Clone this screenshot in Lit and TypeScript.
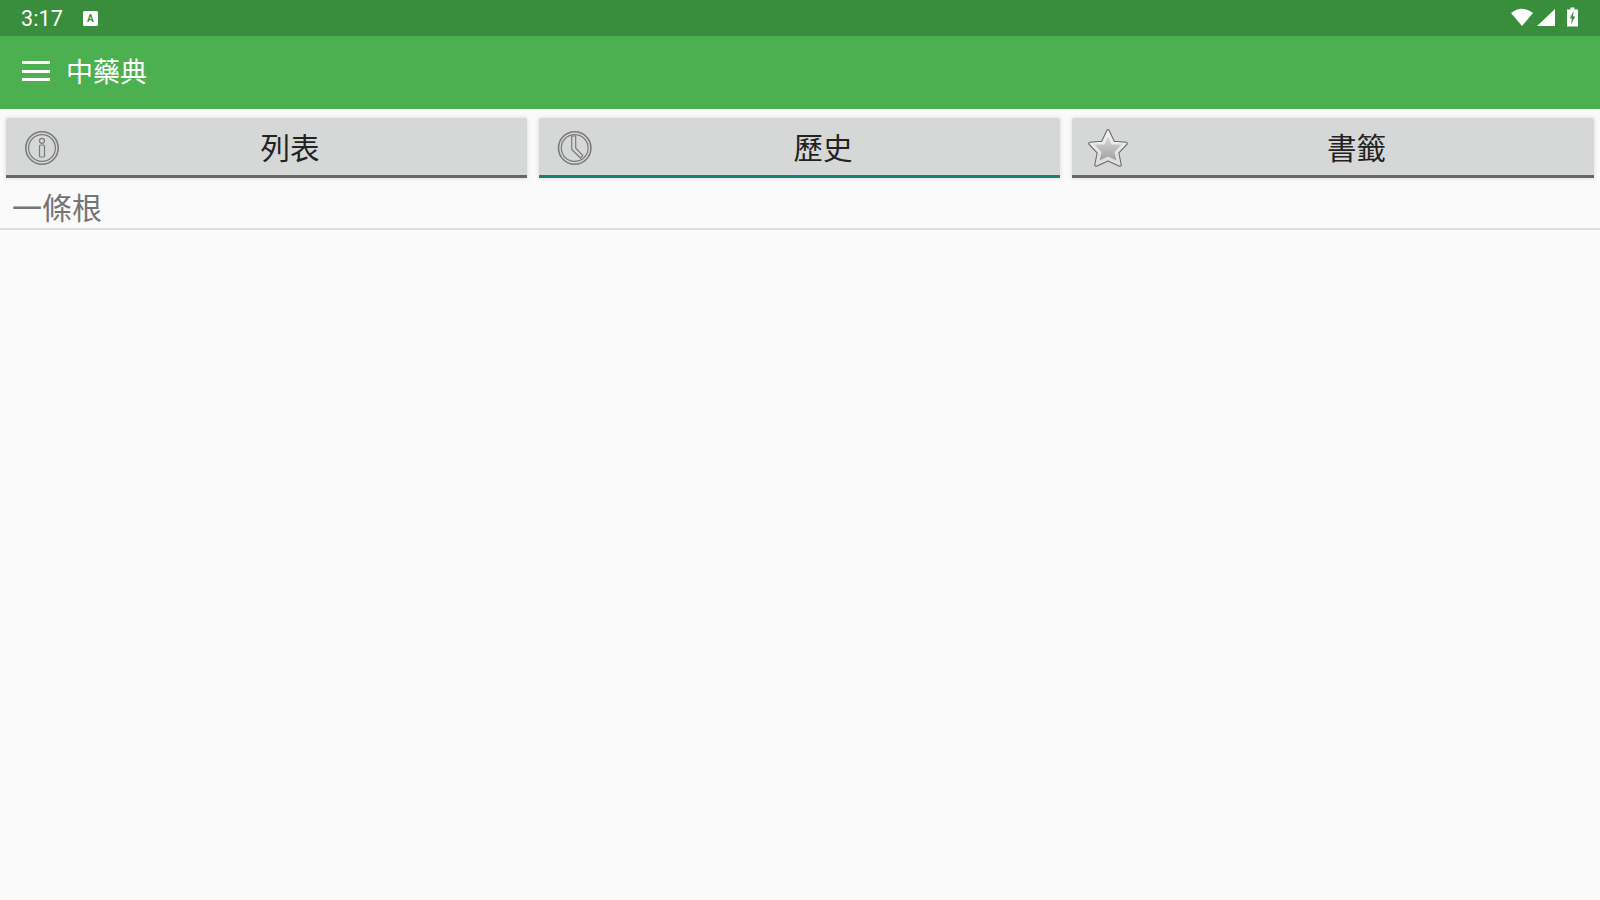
import { LitElement, html, css } from "lit";
import { customElement } from "lit/decorators.js";

@customElement("app-root")
export class AppRoot extends LitElement {
  static styles = css`
    :host { display: block; width: 1600px; height: 900px; background: #fafafa; overflow: hidden; font-family: "Noto Sans CJK TC", sans-serif; }
    .status { height: 36px; background: #388e3c; display: flex; align-items: center; padding: 0 21px 0 21px; color: #fff; }
    .time { font: 21.5px/37px Roboto, sans-serif; letter-spacing: 0.1px; }
    .kb { margin-left: 20px; width: 15px; height: 15px; background: #fff; border-radius: 1.5px; color: #388e3c; font: 700 10px/15px Roboto, sans-serif; text-align: center; }
    .spacer { flex: 1; }
    .sicons { display: block; }
    .appbar { height: 73px; background: #4caf50; display: flex; align-items: center; color: #fff; padding-left: 22px; box-sizing: border-box; }
    .menu { width: 28px; height: 20px; display: flex; flex-direction: column; justify-content: space-between; margin-top: -3px; }
    .menu i { display: block; height: 3px; background: #fff; }
    .title { margin-left: 16px; font-size: 27px; line-height: 69px; margin-top: -2px; height: 71px; }
    .tabs { display: grid; grid-template-columns: 521px 521px 522px; gap: 12px; padding: 9px 6px 0; }
    .tab { position: relative; height: 60px; box-sizing: border-box; background: #d6d8d7; border-bottom: 3px solid #666; border-radius: 2px 2px 0 0; box-shadow: 0 0 4px rgba(0,0,0,.15); display: flex; align-items: center; justify-content: center; font-size: 29.5px; line-height: 55px; color: #222; padding-left: 47px; }
    .tab.active { border-bottom-color: #1b7f74; }
    .tab svg { position: absolute; left: 18px; top: 12px; }
    .tab svg.star { left: 16px; top: 10px; }
    .row { height: 52px; box-sizing: border-box; border-bottom: 2px solid #dedede; padding-left: 12px; font-size: 30px; line-height: 56px; color: #757575; }
  `;

  private info() {
    return html`<svg width="36" height="36" viewBox="0 0 36 36" fill="none" stroke="#7a7a7a">
      <circle cx="18" cy="18" r="16.2" stroke-width="1.6"/>
      <circle cx="18" cy="18" r="13.4" stroke-width="1.2"/>
      <circle cx="18" cy="10.8" r="2.5" stroke-width="1.2"/>
      <rect x="15.5" y="15" width="5" height="12" rx="1" stroke-width="1.2"/>
    </svg>`;
  }
  private clock() {
    return html`<svg width="36" height="36" viewBox="0 0 36 36" fill="none" stroke="#7a7a7a">
      <circle cx="17.7" cy="18" r="16.2" stroke-width="1.6"/>
      <circle cx="17.7" cy="18" r="13.4" stroke-width="1.2"/>
      <path d="M14.7 6 V19.5 L23.5 28 L25.8 25.6 L18.7 18 V6 Z" stroke-width="1.2" stroke-linejoin="round"/>
    </svg>`;
  }
  private star() {
    const outer = "M20 3 L25.5 14.5 L38 15.5 L29.5 24.5 L32 37 L20 31.5 L8 37 L10.5 24.5 L2 15.5 L14.5 14.5 Z";
    return html`<svg class="star" width="42" height="42" viewBox="0 0 42 42">
      <defs>
        <linearGradient id="g" x1="0" y1="0" x2="0" y2="1"><stop offset="0" stop-color="#f2f2f2"/><stop offset="1" stop-color="#dcdcdc"/></linearGradient>
        <linearGradient id="h" x1="0" y1="0" x2="0" y2="1"><stop offset="0" stop-color="#d8d8d8"/><stop offset="1" stop-color="#a0a0a0"/></linearGradient>
      </defs>
      <path d=${outer} fill="#6a6a6a" stroke="#6a6a6a" stroke-width="3.6" stroke-linejoin="round"/>
      <path d=${outer} fill="url(#g)" stroke="url(#g)" stroke-width="1.4" stroke-linejoin="round"/>
      <path d="M20 8.5 L23.5 16.5 L33.5 16.5 L26.5 24 L28.5 32.5 L20 28.5 L11.5 32.5 L13.5 24 L6.5 16.5 L16.5 16.5 Z" fill="url(#h)"/>
    </svg>`;
  }

  render() {
    return html`
      <div class="status">
        <span class="time">3:17</span>
        <span class="kb">A</span>
        <span class="spacer"></span>
        <svg class="sicons" width="68" height="36" viewBox="0 0 68 36" fill="#fff">
          <path d="M0 13 Q11 4.5 22 13 L11 26 Z"/>
          <path d="M26 26 L44 9 L44 26 Z"/>
          <path fill-rule="evenodd" d="M56 9.5 H59.5 V7.5 H63.5 V9.5 H67 V26.5 H56 Z M62.5 11 L58.8 18.5 H61 L60 24.5 L64.2 16.5 H62 Z"/>
        </svg>
      </div>
      <div class="appbar">
        <div class="menu"><i></i><i></i><i></i></div>
        <div class="title">中藥典</div>
      </div>
      <div class="tabs">
        <div class="tab">${this.info()}<span>列表</span></div>
        <div class="tab active">${this.clock()}<span>歷史</span></div>
        <div class="tab">${this.star()}<span>書籤</span></div>
      </div>
      <div class="row">一條根</div>
    `;
  }
}
